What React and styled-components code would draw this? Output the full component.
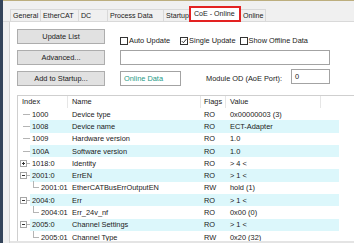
import React from 'react';
import styled, { createGlobalStyle } from 'styled-components';

const GlobalStyle = createGlobalStyle`
  html, body {
    margin: 0;
    padding: 0;
    background: #f0f0f0;
  }
  body {
    font-family: "Liberation Sans", Arial, sans-serif;
    font-size: 7.4px;
    color: #1a1a1a;
  }
`;

const Frame = styled.div`
  display: flex;
  width: 354px;
  height: 243px;
  overflow: hidden;
`;

const SideBar = styled.div`
  width: 3px;
  background: #34445a;
`;

const Main = styled.div`
  flex: 1;
  display: flex;
  flex-direction: column;
  border-top: 1px solid #bcae7e;
  min-width: 0;
`;

const TabStrip = styled.div`
  height: 20px;
  display: flex;
  align-items: flex-end;
  padding-left: 7px;
  border-bottom: 1px solid #d9d9d9;
`;

const Tab = styled.div`
  box-sizing: border-box;
  width: ${p => p.w}px;
  height: ${p => (p.active ? 16 : 12)}px;
  padding-left: ${p => (p.active ? 3 : 2)}px;
  line-height: ${p => (p.active ? 13 : 12)}px;
  font-size: 7.1px;
  white-space: nowrap;
  overflow: hidden;
  background: ${p => (p.active ? '#fff' : '#f0f0f0')};
  border: ${p => (p.active ? '2px solid #e32222' : '1px solid #d9d9d9')};
  border-bottom: ${p => (p.active ? '2px solid #e32222' : 'none')};
  margin-right: -1px;
  margin-bottom: ${p => (p.active ? -1 : 0)}px;
  position: relative;
  z-index: ${p => (p.active ? 1 : 0)};
`;

const Panel = styled.div`
  flex: 1;
  display: flex;
  flex-direction: column;
  margin-left: 6px;
  background: #fff;
  border-left: 1px solid #d4d4d4;
  min-height: 0;
`;

const Controls = styled.div`
  display: grid;
  grid-template-columns: 88px 1fr;
  grid-auto-rows: 15px;
  column-gap: 15px;
  row-gap: 6px;
  padding: 7px 25px 0 7px;
`;

const Button = styled.div`
  box-sizing: border-box;
  border: 1px solid #adadad;
  background: #e1e1e1;
  display: flex;
  align-items: center;
  justify-content: center;
`;

const CheckRow = styled.div`
  display: flex;
  align-items: flex-end;
  margin-bottom: -1px;
`;

const Check = styled.label`
  display: flex;
  align-items: center;
  gap: 1px;
  margin-right: ${p => p.gap || 0}px;
  white-space: nowrap;
`;

const Box = styled.span`
  box-sizing: border-box;
  width: 8px;
  height: 8px;
  border: 1px solid #333;
  background: #fff;
  display: flex;
  align-items: center;
  justify-content: center;
`;

const Field = styled.div`
  box-sizing: border-box;
  border: 1px solid #a3a3a3;
  background: #fff;
  color: ${p => p.color || '#1a1a1a'};
  width: ${p => (p.w ? `${p.w}px` : 'auto')};
  display: flex;
  align-items: center;
  padding-left: 3px;
`;

const FieldRow = styled.div`
  display: flex;
  align-items: stretch;
`;

const ModuleLabel = styled.div`
  margin-left: 25px;
  margin-right: 4px;
  display: flex;
  align-items: center;
  white-space: nowrap;
  width: 81px;
`;

const ModuleInput = styled(Field)`
  margin-top: -2px;
  height: 15px;
`;

const Table = styled.div`
  flex: 1;
  margin: 9px 0 0 7px;
  border-top: 1px solid #cfcfcf;
  border-left: 1px solid #cfcfcf;
  min-height: 0;
`;

const HeaderRow = styled.div`
  display: grid;
  grid-template-columns: 50px 133px 25px 95px 1fr;
  height: 12px;
`;

const HeaderCell = styled.div`
  padding-left: ${p => p.pad || 4}px;
  line-height: 12px;
  border-right: ${p => (p.last ? 'none' : '1px solid #e6e6e6')};
  white-space: nowrap;
`;

const Row = styled.div`
  display: flex;
  height: 12.3px;
  width: 321px;
`;

const Gutter = styled.div`
  width: 12px;
  display: flex;
  align-items: center;
  padding-left: 2px;
  box-sizing: border-box;
`;

const Dash = styled.span`
  width: ${p => p.w || 7}px;
  margin-left: ${p => (p.offset === undefined ? 3 : p.offset)}px;
  border-top: 1px solid #b4b4b4;
`;

const Toggle = styled.span`
  box-sizing: border-box;
  width: 7px;
  height: 7px;
  border: 1px solid #a6a6a6;
  background: #fff;
  position: relative;
  flex: none;
  &::before {
    content: '';
    position: absolute;
    left: 1px;
    right: 1px;
    top: 2px;
    height: 1px;
    background: #333;
  }
  &::after {
    content: '';
    display: ${p => (p.open ? 'none' : 'block')};
    position: absolute;
    top: 1px;
    bottom: 1px;
    left: 2px;
    width: 1px;
    background: #333;
  }
`;

const Body = styled.div`
  flex: 1;
  display: grid;
  grid-template-columns: 38px 133px 25px 1fr;
  align-items: center;
  background: ${p => (p.hl ? '#dcf7fb' : 'transparent')};
`;

const Cell = styled.div`
  padding-left: ${p => p.pad || 4}px;
  white-space: nowrap;
  display: flex;
  align-items: center;
  height: 100%;
`;

const Elbow = styled.span`
  width: 5px;
  height: 6px;
  margin: -6px 2px 0 1px;
  border-left: 1px solid #b4b4b4;
  border-bottom: 1px solid #b4b4b4;
`;

const ScrollStrip = styled.div`
  height: 2px;
  background: #e4e4e4;
`;

const tabs = [
  ['General', 31],
  ['EtherCAT', 39],
  ['DC', 30],
  ['Process Data', 57],
  ['Startup', 27],
  ['CoE - Online', 52, true],
  ['Online', 26],
];

const rows = [
  { idx: '1000', name: 'Device type', flags: 'RO', value: '0x00000003 (3)' },
  { idx: '1008', name: 'Device name', flags: 'RO', value: 'ECT-Adapter' },
  { idx: '1009', name: 'Hardware version', flags: 'RO', value: '1.0' },
  { idx: '100A', name: 'Software version', flags: 'RO', value: '1.0' },
  { idx: '1018:0', name: 'Identity', flags: 'RO', value: '> 4 <', node: 'closed' },
  { idx: '2001:0', name: 'ErrEN', flags: 'RO', value: '> 1 <', node: 'open' },
  { idx: '2001:01', name: 'EtherCATBusErrOutputEN', flags: 'RW', value: 'hold (1)', child: true },
  { idx: '2004:0', name: 'Err', flags: 'RO', value: '> 1 <', node: 'open' },
  { idx: '2004:01', name: 'Err_24v_nf', flags: 'RO', value: '0x00 (0)', child: true },
  { idx: '2005:0', name: 'Channel Settings', flags: 'RO', value: '> 1 <', node: 'open' },
  { idx: '2005:01', name: 'Channel Type', flags: 'RW', value: '0x20 (32)', child: true },
];

const CheckMark = () => (
  <svg width="6" height="6" viewBox="0 0 6 6">
    <path d="M0.8 3.1 L2.4 4.7 L5.3 1.2" fill="none" stroke="#222" strokeWidth="0.9" />
  </svg>
);

export default function App() {
  return (
    <>
      <GlobalStyle />
      <Frame>
        <SideBar />
        <Main>
          <TabStrip>
            {tabs.map(([label, w, active]) => (
              <Tab key={label} w={w} active={active}>{label}</Tab>
            ))}
          </TabStrip>
          <Panel>
            <Controls>
              <Button>Update List</Button>
              <CheckRow>
                <Check gap={10}><Box />Auto Update</Check>
                <Check gap={4}><Box><CheckMark /></Box>Single Update</Check>
                <Check><Box />Show Offline Data</Check>
              </CheckRow>
              <Button>Advanced...</Button>
              <Field />
              <Button>Add to Startup...</Button>
              <FieldRow>
                <Field w={61} color="#1f9a86">Online Data</Field>
                <ModuleLabel>Module OD (AoE Port):</ModuleLabel>
                <ModuleInput w={39}>0</ModuleInput>
              </FieldRow>
            </Controls>
            <Table>
              <HeaderRow>
                <HeaderCell pad={4}>Index</HeaderCell>
                <HeaderCell>Name</HeaderCell>
                <HeaderCell pad={3}>Flags</HeaderCell>
                <HeaderCell>Value</HeaderCell>
                <HeaderCell last />
              </HeaderRow>
              {rows.map((r, i) => (
                <Row key={r.idx}>
                  <Gutter>
                    {r.node ? (
                      <>
                        <Toggle open={r.node === 'open'} />
                        <Dash offset={0} w={3} />
                      </>
                    ) : r.child ? null : (
                      <Dash />
                    )}
                  </Gutter>
                  <Body hl={i % 2 === 1}>
                    <Cell pad={2}>
                      {r.child && <Elbow />}
                      {r.idx}
                    </Cell>
                    <Cell>{r.name}</Cell>
                    <Cell pad={3}>{r.flags}</Cell>
                    <Cell>{r.value}</Cell>
                  </Body>
                </Row>
              ))}
            </Table>
            <ScrollStrip />
          </Panel>
        </Main>
      </Frame>
    </>
  );
}
